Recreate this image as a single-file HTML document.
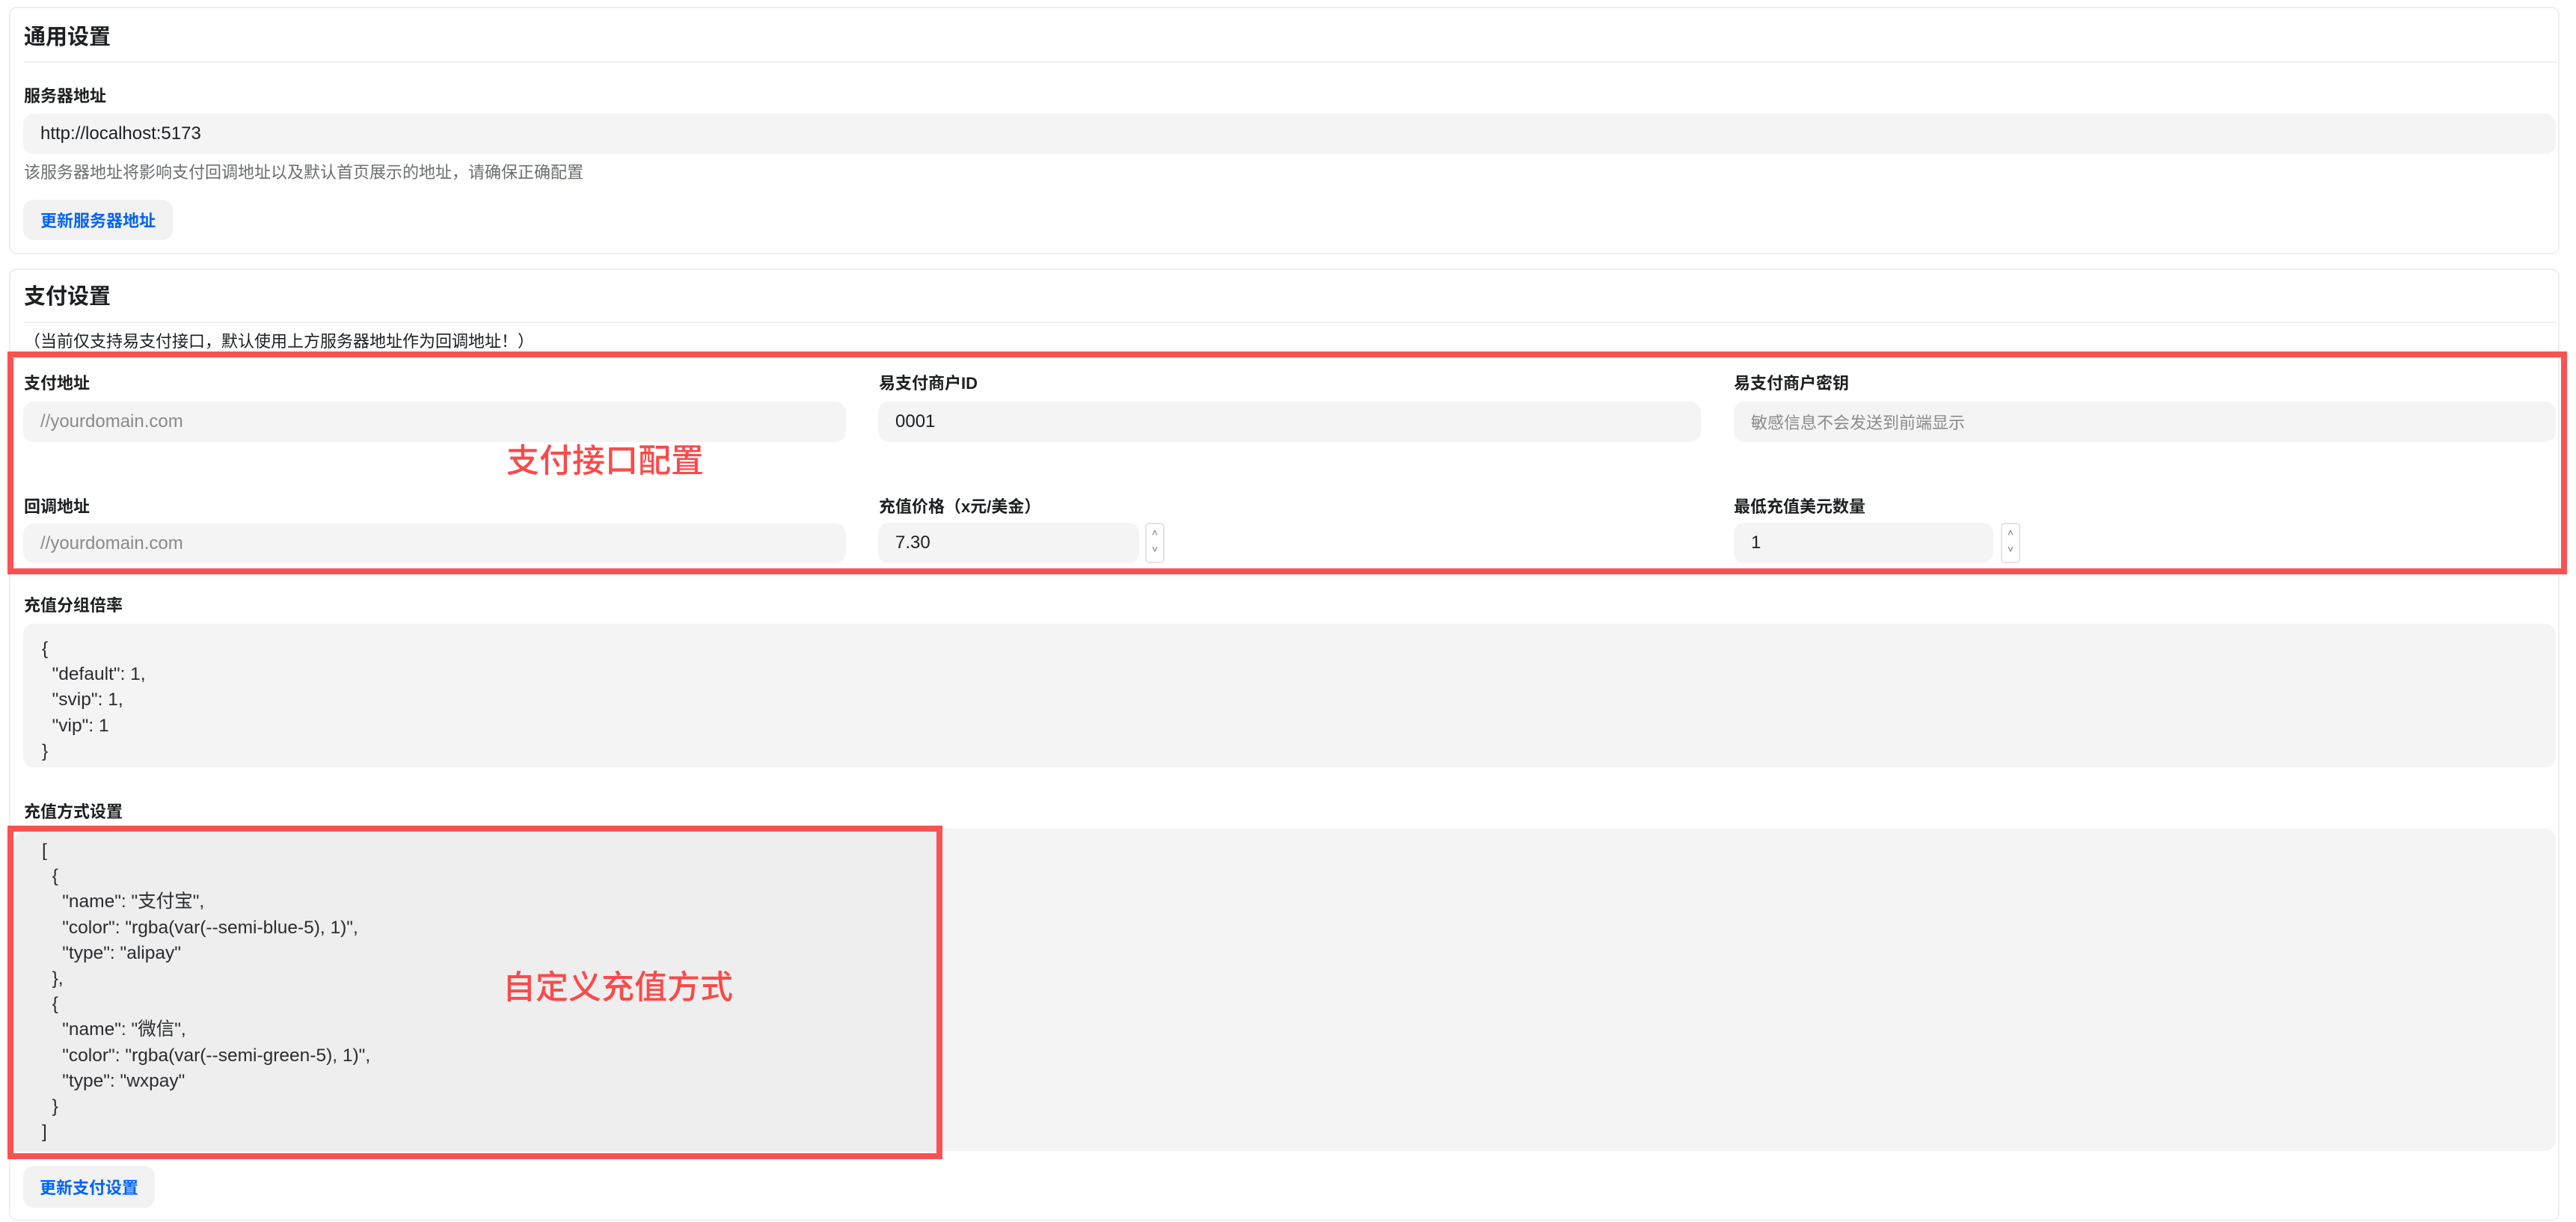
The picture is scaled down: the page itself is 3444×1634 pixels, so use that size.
<!DOCTYPE html>
<html><head><meta charset="utf-8">
<style>
*{margin:0;padding:0;box-sizing:border-box}
body{width:3444px;height:1634px;background:#fff;font-family:"Liberation Sans","Noto Sans CJK SC",sans-serif;color:#1c1f23;position:relative;overflow:hidden}
.a{position:absolute}
.card{position:absolute;border:2px solid #efefef;border-radius:10px;background:#fff}
.t{position:absolute;white-space:nowrap;line-height:1}
.h{font-size:29px;font-weight:bold}
.lb{font-size:22px;font-weight:bold}
.hr{position:absolute;height:2px;background:#f0f0f0}
.in{position:absolute;background:#f4f4f4;border-radius:14px;font-size:24px;padding-left:23px;display:flex;align-items:center}
.ph{color:#8a8a8a}
.btn{position:absolute;background:#f2f2f3;border-radius:14px;color:#0064fa;font-size:22px;font-weight:bold;display:flex;align-items:center;justify-content:center}
.red{position:absolute;border:8px solid #fa5252}
.rt{position:absolute;color:#fa4a4a;font-size:44px;font-weight:500;white-space:nowrap;line-height:1}
.spin{position:absolute;border:2px solid #e4e4e4;border-radius:5px;width:26px;height:54px;color:#777;font-size:14px;text-align:center;line-height:22px}
.code{position:absolute;font-size:24.5px;white-space:pre;line-height:34.2px;color:#2a2c30}
</style></head><body>

<div class="card" style="left:12px;top:9px;width:3410px;height:331px"></div>
<div class="t h" style="left:32px;top:36px">通用设置</div>
<div class="hr" style="left:32px;top:82px;width:3386px"></div>
<div class="t lb" style="left:32px;top:118px">服务器地址</div>
<div class="in" style="left:31px;top:152px;width:3386px;height:54px">http://localhost:5173</div>
<div class="t" style="left:32px;top:220px;font-size:22px;color:#6b6e73">该服务器地址将影响支付回调地址以及默认首页展示的地址，请确保正确配置</div>
<div class="btn" style="left:31px;top:267px;width:200px;height:54px">更新服务器地址</div>

<div class="card" style="left:12px;top:359px;width:3410px;height:1273px"></div>
<div class="t h" style="left:32px;top:383px">支付设置</div>
<div class="hr" style="left:32px;top:430px;width:3386px"></div>
<div class="t" style="left:32px;top:446px;font-size:22px">（当前仅支持易支付接口，默认使用上方服务器地址作为回调地址！）</div>

<div class="t lb" style="left:32px;top:502px">支付地址</div>
<div class="in ph" style="left:31px;top:537px;width:1100px;height:54px">//yourdomain.com</div>
<div class="t lb" style="left:1175px;top:502px">易支付商户ID</div>
<div class="in" style="left:1174px;top:537px;width:1100px;height:54px">0001</div>
<div class="t lb" style="left:2318px;top:502px">易支付商户密钥</div>
<div class="in ph" style="left:2318px;top:537px;width:1099px;height:54px;font-size:22px">敏感信息不会发送到前端显示</div>

<div class="t lb" style="left:32px;top:667px">回调地址</div>
<div class="in ph" style="left:31px;top:700px;width:1100px;height:53px">//yourdomain.com</div>
<div class="t lb" style="left:1175px;top:667px">充值价格（x元/美金）</div>
<div class="in" style="left:1174px;top:699px;width:349px;height:54px">7.30</div>
<div class="spin" style="left:1531px;top:699px">˄<br>˅</div>
<div class="t lb" style="left:2318px;top:667px">最低充值美元数量</div>
<div class="in" style="left:2318px;top:699px;width:347px;height:54px">1</div>
<div class="spin" style="left:2675px;top:699px">˄<br>˅</div>

<div class="red" style="left:10px;top:470px;width:3422px;height:298px"></div>
<div class="rt" style="left:677px;top:595px">支付接口配置</div>

<div class="t lb" style="left:32px;top:799px">充值分组倍率</div>
<div class="a" style="left:31px;top:834px;width:3386px;height:192px;background:#f4f4f4;border-radius:14px"></div>
<div class="code" style="left:56px;top:851px">{
  "default": 1,
  "svip": 1,
  "vip": 1
}</div>

<div class="t lb" style="left:32px;top:1075px">充值方式设置</div>
<div class="a" style="left:31px;top:1108px;width:3386px;height:431px;background:#f4f4f4;border-radius:14px"></div>
<div class="a" style="left:18px;top:1112px;width:1240px;height:428px;background:#eeeeee;border-top-left-radius:14px"></div>
<div class="code" style="left:56px;top:1121px">[
  {
    "name": "支付宝",
    "color": "rgba(var(--semi-blue-5), 1)",
    "type": "alipay"
  },
  {
    "name": "微信",
    "color": "rgba(var(--semi-green-5), 1)",
    "type": "wxpay"
  }
]</div>
<div class="red" style="left:10px;top:1104px;width:1250px;height:446px"></div>
<div class="rt" style="left:672px;top:1299px">自定义充值方式</div>

<div class="btn" style="left:31px;top:1559px;width:176px;height:56px">更新支付设置</div>
</body></html>
